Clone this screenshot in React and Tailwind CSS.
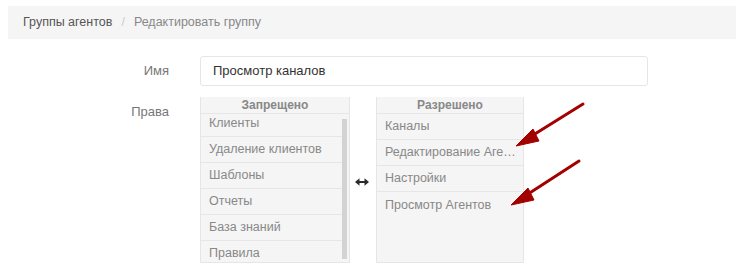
import React from "react";

const denied = ["Клиенты", "Удаление клиентов", "Шаблоны", "Отчеты", "База знаний", "Правила"];
const allowed = ["Каналы", "Редактирование Агентов", "Настройки", "Просмотр Агентов"];

export default function App() {
  return (
    <div
      className="relative w-[744px] h-[268px] overflow-hidden bg-white"
      style={{ fontFamily: '"Liberation Sans", Arial, sans-serif' }}
    >
      <div className="mx-[8px] mt-[6px] h-[33px] bg-[#f5f5f5] flex items-center pl-[15px] text-[12.5px]">
        <span className="text-[#555]">Группы агентов</span>
        <span className="text-[#ccc] px-[9px]">/</span>
        <span className="text-[#888]">Редактировать группу</span>
      </div>

      <div className="flex mt-[17px]">
        <div className="w-[170px] text-right text-[13px] text-[#777] pt-[5px] pr-px">Имя</div>
        <div className="ml-[30px] w-[448px] h-[30px] border border-[#e6e6e6] rounded-[3px] flex items-center pl-[12px] text-[13px] text-[#333]">
          Просмотр каналов
        </div>
      </div>

      <div className="flex mt-[11px]">
        <div className="w-[170px] text-right text-[13px] text-[#777] pt-[5px] pr-px">Права</div>
        <div className="ml-[30px] flex items-start">
          <div className="w-[150px] h-[166px] bg-[#f5f5f5] border border-[#e6e6e6] border-t-0 flex flex-col overflow-hidden">
            <div className="h-[17px] shrink-0 border-b border-[#e6e6e6] text-center text-[12px] font-bold text-[#888] leading-[17px]">
              Запрещено
            </div>
            <div className="flex flex-1 overflow-hidden">
              <div className="flex-1 overflow-hidden">
                <div className="-mt-[3px]">
                  {denied.map((t) => (
                    <div key={t} className="h-[26px] border-b border-[#e6e6e6] pl-[8px] flex items-center text-[12.5px] text-[#888] whitespace-nowrap">
                      {t}
                    </div>
                  ))}
                </div>
              </div>
              <div className="w-[7px] pt-[5px] pb-[3px] flex">
                <div className="w-[5px] bg-[#d3d3d3]"></div>
              </div>
            </div>
          </div>

          <div className="w-[26px] h-[166px] flex items-center justify-center">
            <svg width="14" height="8" viewBox="0 0 14 8" className="mt-[4px] -ml-[2px]">
              <path d="M3 4 H11" stroke="#2b2b2b" strokeWidth="2" />
              <path d="M0 4 L4.5 0.3 L4.5 7.7 Z" fill="#2b2b2b" />
              <path d="M14 4 L9.5 0.3 L9.5 7.7 Z" fill="#2b2b2b" />
            </svg>
          </div>

          <div className="w-[148px] h-[166px] bg-[#f5f5f5] border border-[#e6e6e6] border-t-0 flex flex-col overflow-hidden">
            <div className="h-[17px] shrink-0 border-b border-[#e6e6e6] text-center text-[12px] font-bold text-[#888] leading-[17px]">
              Разрешено
            </div>
            <div>
              {allowed.map((t) => (
                <div key={t} className="h-[26px] border-b border-[#e6e6e6] last:border-b-0 pl-[8px] pr-[3px] flex items-center text-[12.5px] text-[#888] whitespace-nowrap overflow-hidden">
                  <span className="truncate">{t}</span>
                </div>
              ))}
            </div>
          </div>
        </div>
      </div>

      <svg className="absolute left-0 top-0 pointer-events-none" width="744" height="268">
        <g fill="#a30000" stroke="#a30000">
          <line x1="583" y1="104" x2="530" y2="137" strokeWidth="3" strokeLinecap="round" />
          <path d="M516 146 L533 129 L539 141 Z" strokeWidth="1" />
          <line x1="579" y1="161" x2="525" y2="196" strokeWidth="3" strokeLinecap="round" />
          <path d="M511 205 L528 188 L534 200 Z" strokeWidth="1" />
        </g>
      </svg>
    </div>
  );
}
